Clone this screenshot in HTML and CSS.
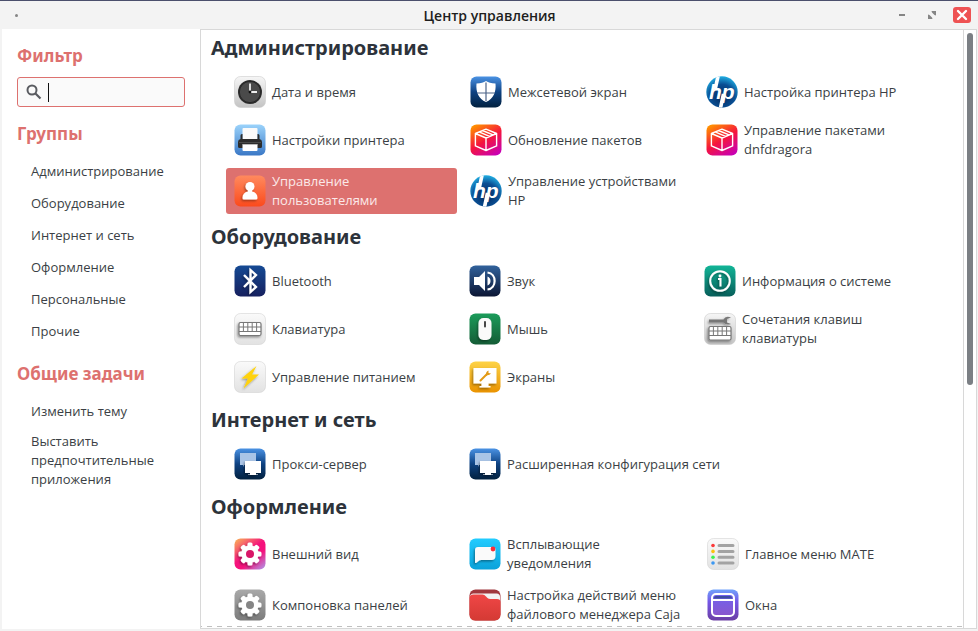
FILE: index.html
```html
<!DOCTYPE html>
<html lang="ru">
<head>
<meta charset="utf-8">
<title>Центр управления</title>
<link rel="stylesheet" href="styles.css">
</head>
<body>
<svg class="defs" width="0" height="0" aria-hidden="true">
  <defs>
    <linearGradient id="g-light" x2="0" y2="1"><stop offset="0" stop-color="#fafafa"/><stop offset="1" stop-color="#e2e2e2"/></linearGradient>
    <linearGradient id="g-silver" x2="0" y2="1"><stop offset="0" stop-color="#f6f6f6"/><stop offset="1" stop-color="#c4c4c4"/></linearGradient>
    <linearGradient id="g-sky" x2="0" y2="1"><stop offset="0" stop-color="#9bd3fb"/><stop offset="1" stop-color="#3a78c6"/></linearGradient>
    <linearGradient id="g-navy" x2="0" y2="1"><stop offset="0" stop-color="#4a92e4"/><stop offset=".5" stop-color="#0e4282"/><stop offset="1" stop-color="#02213f"/></linearGradient>
    <linearGradient id="g-orange" x2="0" y2="1"><stop offset="0" stop-color="#ff8a5e"/><stop offset="1" stop-color="#fb4a1c"/></linearGradient>
    <linearGradient id="g-pkg" x1=".2" x2=".8" y2="1"><stop offset="0" stop-color="#ff8f00"/><stop offset=".5" stop-color="#f5153d"/><stop offset="1" stop-color="#c800b4"/></linearGradient>
    <radialGradient id="g-hp" cx=".5" cy=".65" r=".65"><stop offset="0" stop-color="#03285c"/><stop offset=".6" stop-color="#0a4f94"/><stop offset="1" stop-color="#22b2e6"/></radialGradient>
    <linearGradient id="g-bt" x2="0" y2="1"><stop offset="0" stop-color="#154a94"/><stop offset="1" stop-color="#16205e"/></linearGradient>
    <linearGradient id="g-sound" x2="0" y2="1"><stop offset="0" stop-color="#31629c"/><stop offset="1" stop-color="#0c1634"/></linearGradient>
    <linearGradient id="g-info" x2="0" y2="1"><stop offset="0" stop-color="#12b597"/><stop offset="1" stop-color="#075e5a"/></linearGradient>
    <linearGradient id="g-mouse" x2="0" y2="1"><stop offset="0" stop-color="#1b9c5a"/><stop offset="1" stop-color="#145c36"/></linearGradient>
    <linearGradient id="g-yellow" x2="0" y2="1"><stop offset="0" stop-color="#fdd347"/><stop offset="1" stop-color="#ea9300"/></linearGradient>
    <linearGradient id="g-look" x1=".1" x2=".9" y2="1"><stop offset="0" stop-color="#f9a95a"/><stop offset=".45" stop-color="#f5127c"/><stop offset=".65" stop-color="#f5127c"/><stop offset="1" stop-color="#b58be0"/></linearGradient>
    <linearGradient id="g-grey" x2="0" y2="1"><stop offset="0" stop-color="#a9a9a9"/><stop offset="1" stop-color="#7c7c7c"/></linearGradient>
    <linearGradient id="g-cyan" x2="0" y2="1"><stop offset="0" stop-color="#22ccff"/><stop offset="1" stop-color="#0aa2da"/></linearGradient>
    <linearGradient id="g-red" x2="0" y2="1"><stop offset="0" stop-color="#f04646"/><stop offset="1" stop-color="#d43a34"/></linearGradient>
    <linearGradient id="g-win" x2="0" y2="1"><stop offset="0" stop-color="#70a2fb"/><stop offset=".4" stop-color="#7556e6"/><stop offset="1" stop-color="#6b3fa4"/></linearGradient>
    <linearGradient id="g-winin" x2="0" y2="1"><stop offset="0" stop-color="#6f62f0"/><stop offset="1" stop-color="#8a56cc"/></linearGradient>
    <clipPath id="c-round"><circle cx="16" cy="16" r="15.7"/></clipPath>
    <filter id="shade" x="-30%" y="-30%" width="160%" height="160%"><feDropShadow dx="-1" dy="1.4" stdDeviation=".8" flood-color="#000" flood-opacity=".4"/></filter>

    <symbol id="i-clock" viewBox="0 0 32 32"><rect x=".5" y=".5" width="31" height="31" rx="6" fill="url(#g-silver)" stroke="#ccc" stroke-width=".6"/><circle cx="16" cy="16" r="12" fill="#2e2e2e"/><circle cx="16" cy="16" r="10.6" fill="#4a4a4a" stroke="#222" stroke-width=".8"/><path d="M16 7.500V16h7" fill="none" stroke="#eee" stroke-width="1.800"/><circle cx="16" cy="16" r="1.400" fill="#111"/></symbol>
    <symbol id="i-shield" viewBox="0 0 32 32"><rect x=".5" y=".5" width="31" height="31" rx="6" fill="url(#g-navy)"/><path d="M16 5c2.500 1.500 5 2.200 9.500 2.400.8 8.600-2 15.300-9.500 18.600C8.500 22.700 5.700 16 6.500 7.400 11 7.200 13.500 6.500 16 5z" fill="#fff"/><path d="M16 6.500V25M7 17h18" stroke="#4d6488" stroke-width="1.200"/></symbol>
    <symbol id="i-hp" viewBox="0 0 32 32"><g clip-path="url(#c-round)"><rect width="32" height="32" fill="url(#g-hp)"/><path d="M12.300-1L9 14M17.500 18L14.300 33" stroke="#fff" stroke-width="3.600"/><text x="3" y="22.500" class="hp-mark">hp</text></g></symbol>
    <symbol id="i-printer" viewBox="0 0 32 32"><rect x=".5" y=".5" width="31" height="31" rx="6" fill="url(#g-sky)"/><rect x="8.500" y="4" width="15" height="12" rx="1" fill="#fafafa"/><path d="M6.500 11.500q0-1.500 1.500-1.500h.5v5h15v-5h.5q1.500 0 1.500 1.500V15q2.500.5 2.500 3v4.500q0 1.500-1.500 1.500h-21Q4 24 4 22.500V18q0-2.500 2.500-3z" fill="#2c2c2c"/><path d="M5 18.500h22" stroke="#4a4a4a"/><rect x="8.500" y="20" width="15" height="7" rx="1" fill="#fff"/><path d="M8.500 20.500h15" stroke="#bbb"/></symbol>
    <symbol id="i-package" viewBox="0 0 32 32"><rect x=".5" y=".5" width="31" height="31" rx="6" fill="url(#g-pkg)"/><path d="M16 5.200l10.600 4.300v12.400L16 26.500 5.400 21.900V9.500zM5.400 9.500L16 14l10.600-4.500M16 14v12.500M9 7.800l10.600 4.500M12.500 6.500L23 10.900" fill="none" stroke="#fff" stroke-width="1.400" stroke-linejoin="round"/></symbol>
    <symbol id="i-user" viewBox="0 0 32 32"><rect x=".5" y=".5" width="31" height="31" rx="6" fill="url(#g-orange)"/><g fill="#fff" filter="url(#shade)"><circle cx="16" cy="11.500" r="4.500"/><path d="M14 14h4v2.500q5.500 1 5.500 6.500 0 1.500-1.500 1.500H10q-1.500 0-1.500-1.500Q8.500 17.500 14 16.500z"/></g></symbol>
    <symbol id="i-bluetooth" viewBox="0 0 32 32"><rect x=".5" y=".5" width="31" height="31" rx="6" fill="url(#g-bt)"/><path d="M10 10l12 12-5.500 5V5L22 10 10 22" fill="none" stroke="#fff" stroke-width="2.300" filter="url(#shade)"/></symbol>
    <symbol id="i-sound" viewBox="0 0 32 32"><rect x=".5" y=".5" width="31" height="31" rx="6" fill="url(#g-sound)"/><path d="M5 12h5l6-6v20l-6-6H5z" fill="#fff"/><path d="M18.500 11.500c4 1.500 4 7.500 0 9z" fill="#fff"/><path d="M18.500 7.500c9.500 1 9.500 16 0 17" fill="none" stroke="#fff" stroke-width="2.200"/></symbol>
    <symbol id="i-info" viewBox="0 0 32 32"><rect x=".5" y=".5" width="31" height="31" rx="6" fill="url(#g-info)"/><g filter="url(#shade)"><circle cx="16" cy="16" r="9.800" fill="none" stroke="#fff" stroke-width="2"/><path d="M14 14h2.500v7.500" fill="none" stroke="#fff" stroke-width="2"/><circle cx="16" cy="11" r="1.400" fill="#fff"/></g></symbol>
    <symbol id="i-keyboard" viewBox="0 0 32 32"><rect x=".5" y=".5" width="31" height="31" rx="6" fill="url(#g-light)" stroke="#d4d4d4" stroke-width=".6"/><rect x="5" y="9.500" width="22" height="13" rx="1.500" fill="#fff" stroke="#777" stroke-width="1.200" filter="url(#shade)"/><path d="M5 14h22M5 18.500h22M9.400 9.500v9M13.800 9.500v9M18.200 9.500v9M22.600 9.500v9" stroke="#777" stroke-width="1"/></symbol>
    <symbol id="i-mouse" viewBox="0 0 32 32"><rect x=".5" y=".5" width="31" height="31" rx="6" fill="url(#g-mouse)"/><rect x="9.500" y="5" width="13" height="22" rx="5" fill="#fafafa" filter="url(#shade)"/><path d="M16 9v4.500" stroke="#333" stroke-width="1.800" stroke-linecap="round"/></symbol>
    <symbol id="i-shortcuts" viewBox="0 0 32 32"><rect x=".5" y=".5" width="31" height="31" rx="6" fill="url(#g-silver)" stroke="#ccc" stroke-width=".6"/><path d="M5 6.500h14.500q2-4 7.500-2l-4 1.500v3.500l4 1.500q-5 1.500-7.500-1.500H5z" fill="#777" filter="url(#shade)"/><rect x="5" y="13.500" width="22" height="13.500" rx="1.500" fill="#fff" stroke="#777" stroke-width="1.200" filter="url(#shade)"/><path d="M5 18h22M5 22.500h22M9.400 13.500v9M13.800 13.500v9M18.200 13.500v9M22.600 13.500v9" stroke="#777" stroke-width="1"/></symbol>
    <symbol id="i-power" viewBox="0 0 32 32"><rect x=".5" y=".5" width="31" height="31" rx="6" fill="url(#g-light)" stroke="#d4d4d4" stroke-width=".6"/><path d="M22.500 5L7.500 17.500H14L9.500 27.500 25 13.500h-7z" fill="#ffd20a" filter="url(#shade)"/></symbol>
    <symbol id="i-display" viewBox="0 0 32 32"><rect x=".5" y=".5" width="31" height="31" rx="6" fill="url(#g-yellow)"/><path d="M4.500 7h23v15.500h-8V25h2v1.500h-11V25h2v-2.500h-8z" fill="#fff" filter="url(#shade)"/><path d="M11.500 19.500l6-6" stroke="#e39a14" stroke-width="2" stroke-linecap="round"/><path d="M19.500 9.500q-3 1-2.500 4.500 3 1 5-1.500l-2.500-.5z" fill="#e39a14"/></symbol>
    <symbol id="i-network" viewBox="0 0 32 32"><rect x=".5" y=".5" width="31" height="31" rx="6" fill="url(#g-navy)"/><path d="M6 5h16v12H10l-1 2V17H6z" fill="#a9c4e6"/><path d="M11 13h16v12h-5v1.500h2V27h-10v-.5h2V25h-5z" fill="#fff" filter="url(#shade)"/></symbol>
    <symbol id="gear" viewBox="0 0 32 32"><g fill="#fff"><g id="t1"><rect x="13.500" y="4.500" width="5" height="23" rx="1.500"/><rect x="4.500" y="13.500" width="23" height="5" rx="1.500"/></g><use href="#t1" transform="rotate(45 16 16)"/></g><circle cx="16" cy="16" r="6.200" fill="none" stroke="#fff" stroke-width="5"/></symbol>
    <symbol id="i-look" viewBox="0 0 32 32"><rect x=".5" y=".5" width="31" height="31" rx="6" fill="url(#g-look)"/><use href="#gear" filter="url(#shade)"/><circle cx="16" cy="16" r="4" fill="#d91668"/></symbol>
    <symbol id="i-panels" viewBox="0 0 32 32"><rect x=".5" y=".5" width="31" height="31" rx="6" fill="url(#g-grey)"/><use href="#gear" filter="url(#shade)"/><circle cx="16" cy="16" r="4" fill="#858585"/></symbol>
    <symbol id="i-notify" viewBox="0 0 32 32"><rect x=".5" y=".5" width="31" height="31" rx="6" fill="url(#g-cyan)"/><path d="M9 9h15q2.500 0 2.500 2.500V18q0 4-4 4H12q-2 0-3 1.500-1.500 1.500-3 1.500V12q0-3 3-3z" fill="#fafafa" filter="url(#shade)"/><circle cx="24" cy="11" r="2.400" fill="#fb2c36"/></symbol>
    <symbol id="i-caja" viewBox="0 0 32 32"><rect x=".5" y=".5" width="31" height="31" rx="6" fill="#a0373d"/><path d="M1 8q0-3.500 3.500-3.500h23Q31 4.500 31 8v6H1z" fill="#f2f2f2"/><path d="M.500 9q0-3.500 4-3.500h9q2 0 3.500 2l1.500 1.500q1 1 3 1H28q3.500 0 3.500 3v12q0 6.500-6 6.500h-19q-6 0-6-6z" fill="url(#g-red)"/></symbol>
    <symbol id="i-menu" viewBox="0 0 32 32"><rect x=".5" y=".5" width="31" height="31" rx="6" fill="url(#g-light)" stroke="#d4d4d4" stroke-width=".6"/><g stroke="#a3a3a3" stroke-width="3" stroke-linecap="round"><path d="M12 7.500h14M12 13.400h14M12 19.200h14M12 25h14"/></g><circle cx="6" cy="7.500" r="1.800" fill="#fb3838"/><circle cx="6" cy="13.400" r="1.800" fill="#fcc210"/><circle cx="6" cy="19.200" r="1.800" fill="#3df251"/><circle cx="6" cy="25" r="1.800" fill="#3c98f2"/></symbol>
    <symbol id="i-windows" viewBox="0 0 32 32"><rect x=".5" y=".5" width="31" height="31" rx="6" fill="url(#g-win)"/><rect x="5" y="5" width="22" height="22" rx="4" fill="url(#g-winin)" stroke="#fff" stroke-width="2"/><path d="M7 9q0-2 2-2h14q2 0 2 2v.500H7z" fill="#3d4da0"/><path d="M6 11h20" stroke="#fff" stroke-width="2"/></symbol>
  </defs>
</svg>

<div class="window">
  <header class="titlebar">
    <span class="menu-dot"></span>
    <h1 class="title">Центр управления</h1>
    <div class="window-buttons">
      <button class="window-button" aria-label="Свернуть"><svg width="18" height="18" viewBox="0 0 18 18"><path d="M6 9h6" stroke="#858585" stroke-width="2"/></svg></button>
      <button class="window-button" aria-label="Развернуть"><svg width="18" height="18" viewBox="0 0 18 18"><path d="M8.500 5H13v4.500l-1.500-.5L9 6.500zM5 8.500V13h4.500L9 11.500 6.500 9z" fill="#858585"/></svg></button>
      <button class="window-button close" aria-label="Закрыть"><svg width="18" height="18" viewBox="0 0 18 18"><path d="M5 5l8 8M13 5l-8 8" stroke="#fff" stroke-width="2.400" stroke-linecap="round"/></svg></button>
    </div>
  </header>

  <div class="content">
    <aside class="sidebar">
      <label class="side-heading" for="filter">Фильтр</label>
      <div class="search">
        <svg class="search-icon" width="16" height="16" viewBox="0 0 16 16"><circle cx="6" cy="6" r="4.500" fill="none" stroke="#5a5c61" stroke-width="2"/><path d="M9.500 9.500l5 5" stroke="#5a5c61" stroke-width="2.200"/></svg>
        <span class="caret"></span>
        <input id="filter" class="search-input" type="text">
      </div>
      <h2 class="side-heading">Группы</h2>
      <nav class="side-list">
        <a class="side-link" href="#admin">Администрирование</a>
        <a class="side-link" href="#hardware">Оборудование</a>
        <a class="side-link" href="#network">Интернет и сеть</a>
        <a class="side-link" href="#look">Оформление</a>
        <a class="side-link" href="#personal">Персональные</a>
        <a class="side-link" href="#other">Прочие</a>
      </nav>
      <h2 class="side-heading">Общие задачи</h2>
      <nav class="side-list">
        <a class="side-link" href="#theme">Изменить тему</a>
        <a class="side-link" href="#apps">Выставить предпочтительные приложения</a>
      </nav>
    </aside>

    <main class="pane">
      <div class="viewport">
        <section id="admin">
          <h2 class="group-heading">Администрирование</h2>
          <div class="tiles wide">
            <button class="tile"><svg class="icon"><use href="#i-clock"/></svg><span>Дата и время</span></button>
            <button class="tile"><svg class="icon"><use href="#i-shield"/></svg><span>Межсетевой экран</span></button>
            <button class="tile"><svg class="icon"><use href="#i-hp"/></svg><span>Настройка принтера HP</span></button>
            <button class="tile"><svg class="icon"><use href="#i-printer"/></svg><span>Настройки принтера</span></button>
            <button class="tile"><svg class="icon"><use href="#i-package"/></svg><span>Обновление пакетов</span></button>
            <button class="tile"><svg class="icon"><use href="#i-package"/></svg><span>Управление пакетами dnfdragora</span></button>
            <button class="tile selected"><svg class="icon"><use href="#i-user"/></svg><span>Управление пользователями</span></button>
            <button class="tile"><svg class="icon"><use href="#i-hp"/></svg><span>Управление устройствами HP</span></button>
          </div>
        </section>
        <section id="hardware">
          <h2 class="group-heading">Оборудование</h2>
          <div class="tiles">
            <button class="tile"><svg class="icon"><use href="#i-bluetooth"/></svg><span>Bluetooth</span></button>
            <button class="tile"><svg class="icon"><use href="#i-sound"/></svg><span>Звук</span></button>
            <button class="tile"><svg class="icon"><use href="#i-info"/></svg><span>Информация о системе</span></button>
            <button class="tile"><svg class="icon"><use href="#i-keyboard"/></svg><span>Клавиатура</span></button>
            <button class="tile"><svg class="icon"><use href="#i-mouse"/></svg><span>Мышь</span></button>
            <button class="tile"><svg class="icon"><use href="#i-shortcuts"/></svg><span>Сочетания клавиш клавиатуры</span></button>
            <button class="tile"><svg class="icon"><use href="#i-power"/></svg><span>Управление питанием</span></button>
            <button class="tile"><svg class="icon"><use href="#i-display"/></svg><span>Экраны</span></button>
          </div>
        </section>
        <section id="network">
          <h2 class="group-heading">Интернет и сеть</h2>
          <div class="tiles">
            <button class="tile"><svg class="icon"><use href="#i-network"/></svg><span>Прокси-сервер</span></button>
            <button class="tile span-two"><svg class="icon"><use href="#i-network"/></svg><span>Расширенная конфигурация сети</span></button>
          </div>
        </section>
        <section id="look">
          <h2 class="group-heading">Оформление</h2>
          <div class="tiles uneven">
            <button class="tile"><svg class="icon"><use href="#i-look"/></svg><span>Внешний вид</span></button>
            <button class="tile"><svg class="icon"><use href="#i-notify"/></svg><span>Всплывающие уведомления</span></button>
            <button class="tile"><svg class="icon"><use href="#i-menu"/></svg><span>Главное меню MATE</span></button>
            <button class="tile"><svg class="icon"><use href="#i-panels"/></svg><span>Компоновка панелей</span></button>
            <button class="tile"><svg class="icon"><use href="#i-caja"/></svg><span>Настройка действий меню файлового менеджера Caja</span></button>
            <button class="tile"><svg class="icon"><use href="#i-windows"/></svg><span>Окна</span></button>
          </div>
        </section>
      </div>
      <div class="scrollbar"><div class="thumb" style="height: 59.4%"></div></div>
    </main>
  </div>
</div>
</body>
</html>
```
FILE: styles.css
```css
* {
  box-sizing: border-box;
}

body {
  margin: 0;
  background: #4b4f6c;
  color: #3b3f45;
  font-family: "Open Sans", "Noto Sans", sans-serif;
  font-size: 13px;
  line-height: 19px;
}

.defs {
  position: absolute;
}

.window {
  display: flex;
  flex-direction: column;
  height: 100vh;
  padding: 0 1px 2px 2px;
  border-top: 1px solid #4b4f6c;
  background: #f3f3f3;
  overflow: hidden;
}

.titlebar {
  display: grid;
  grid-template-columns: 1fr auto 1fr;
  align-items: center;
  flex: none;
  height: 28px;
}

.menu-dot {
  width: 3px;
  height: 3px;
  margin-left: 13px;
  border-radius: 50%;
  background: #858585;
}

.title {
  margin: 0;
  color: #1e1e1e;
  font-size: 14px;
  font-weight: 600;
}

.window-buttons {
  display: flex;
  justify-content: flex-end;
  gap: 12px;
  padding-right: 6px;
}

.window-button {
  display: flex;
  width: 18px;
  height: 16px;
  align-items: center;
  padding: 0;
  border: 0;
  border-radius: 3px;
  background: none;
}

.close {
  background: #ee5253;
}

.content {
  display: flex;
  flex: 1;
  min-height: 0;
  background: #fff;
}

.sidebar {
  display: flex;
  flex-direction: column;
  flex: none;
  width: 198px;
  padding: 15px;
}

.side-heading {
  display: block;
  margin: 0;
  color: #dd716f;
  font-family: "Noto Sans", "Open Sans", sans-serif;
  font-size: 17px;
  font-weight: 700;
  line-height: 24px;
}

.search {
  display: flex;
  align-items: center;
  height: 30px;
  margin: 9px 0 15px;
  padding: 0 8px;
  border: 1px solid #dd716f;
  border-radius: 3px;
  background: #fafafa;
}

.search-icon {
  flex: none;
}

.caret {
  flex: none;
  width: 1px;
  height: 19px;
  margin-left: 6px;
  background: #111;
}

.search-input {
  flex: 1;
  min-width: 0;
  padding: 0;
  border: 0;
  outline: 0;
  background: none;
  font: inherit;
}

.side-list {
  display: flex;
  flex-direction: column;
  gap: 2px;
  margin: 10px 0 16px;
}

.side-link {
  display: flex;
  align-items: center;
  min-height: 30px;
  padding: 4px 14px;
  color: inherit;
  text-decoration: none;
}

.pane {
  position: relative;
  display: flex;
  flex: 1;
  min-width: 0;
  border: 1px solid #d8d8d8;
}

.viewport {
  flex: 1;
  min-width: 0;
  padding: 4px 34px 0 10px;
  overflow: hidden;
}

.pane::after {
  content: "";
  position: absolute;
  right: 13px;
  bottom: 1px;
  left: 0;
  height: 1px;
  background: repeating-linear-gradient(90deg, #c0c0c0 0 1px, transparent 1px 6px, #c0c0c0 6px 10px);
}

.group-heading {
  margin: 9px 0 11px;
  color: #2d333b;
  font-family: "Noto Sans", "Open Sans", sans-serif;
  font-size: 20px;
  font-weight: 700;
  line-height: 27px;
}

section:first-child .group-heading {
  margin-top: 0;
}

.tiles {
  display: grid;
  grid-template-columns: repeat(3, 1fr);
  gap: 5px;
  padding: 0 3px 0 15px;
}

.tiles.wide {
  padding-right: 0;
}

.tiles.uneven {
  grid-template-columns: 230fr 233fr 227fr;
}

.tile {
  display: flex;
  align-items: center;
  gap: 6px;
  min-height: 40px;
  padding: 4px 10px 4px 8px;
  border: 0;
  border-radius: 3px;
  background: none;
  color: inherit;
  font: inherit;
  text-align: left;
}

.tile.selected {
  background: #dd716f;
  color: #fbe9e9;
}

.span-two {
  grid-column: span 2;
}

.icon {
  flex: none;
  width: 32px;
  height: 32px;
}

.hp-mark {
  fill: #fff;
  font: italic bold 21px "Liberation Sans", sans-serif;
}

.scrollbar {
  flex: none;
  width: 13px;
  padding: 3px;
  border-left: 1px solid #d8d8d8;
}

.thumb {
  width: 6px;
  border-radius: 3px;
  background: #7b7f84;
}
```
